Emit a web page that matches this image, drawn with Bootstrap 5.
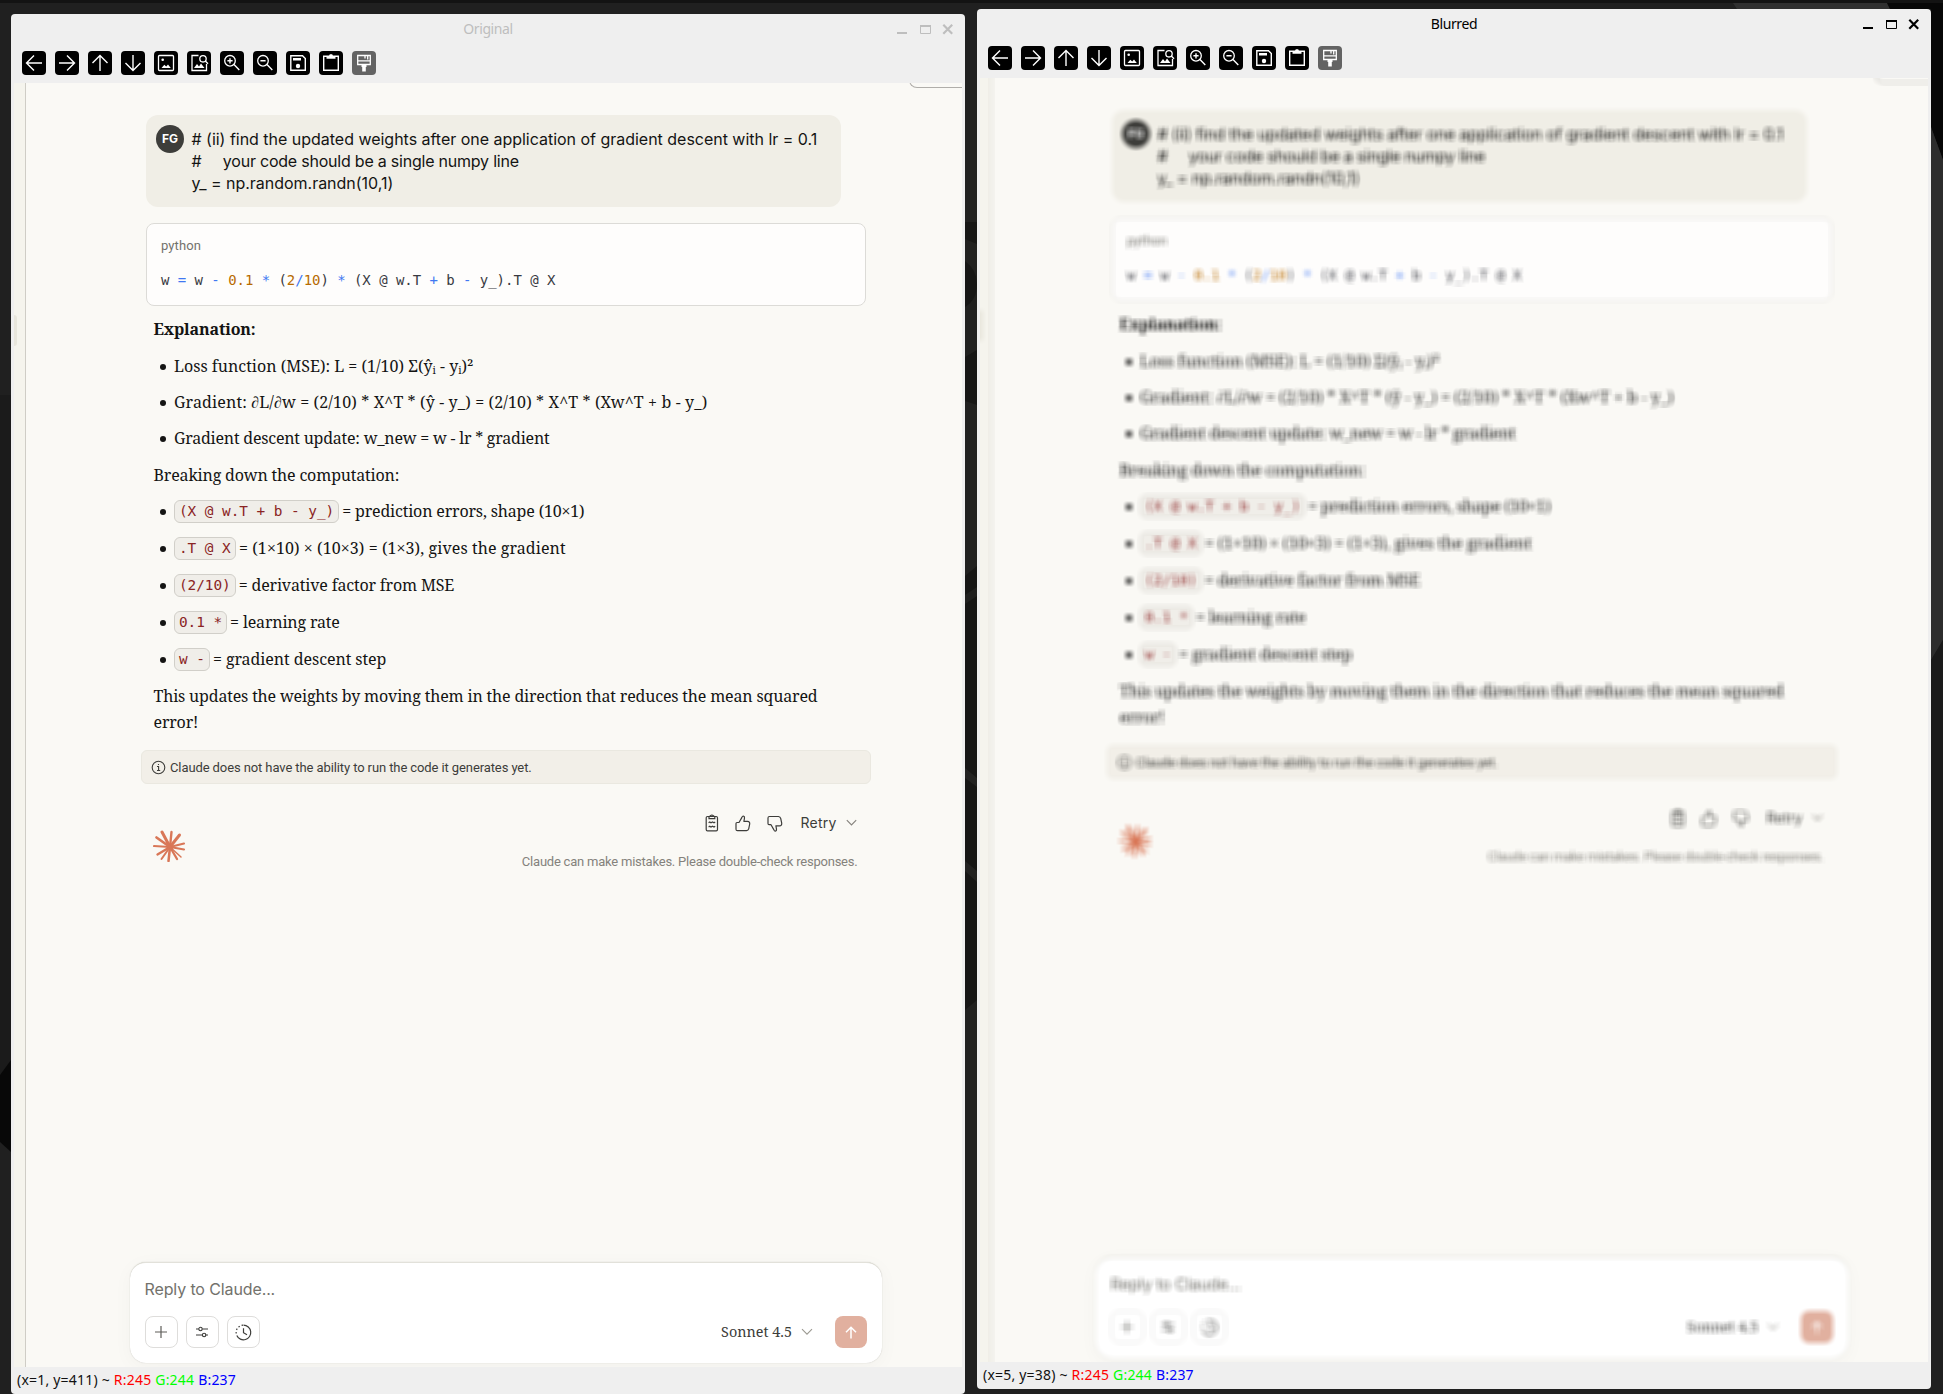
<!DOCTYPE html>
<html lang="en">
<head>
<meta charset="utf-8">
<meta name="viewport" content="width=device-width, initial-scale=1">
<title>Original / Blurred</title>
<link href="https://cdn.jsdelivr.net/npm/bootstrap@5.3.0/dist/css/bootstrap.min.css" rel="stylesheet">
<style>
html,body{height:1394px;overflow:hidden}
body{background:#212121;color:#141413;font-family:Inter,"Liberation Sans",sans-serif}
.desktop{width:1943px;height:1394px;background:linear-gradient(#131313 0 3px,transparent 3px)}
.wallpaper{position:absolute;inset:0;z-index:0}
.win{width:954px;height:1380px;background:#efefef;border-radius:4px;z-index:1;overflow:hidden}
.win-a{margin:14px 0 0 11px}
.win-b{margin:9px 0 0 12px}
.titlebar{height:30px;font:14px/30px "Noto Sans",sans-serif;letter-spacing:-.4px;color:#000}
.win-a .titlebar{color:#bebebe}
.titlebar .grow-side{flex:1 1 0;padding:0 10px}
.toolbar{height:39px;padding:7px 0 0 11px;gap:9px}
.toolbar svg{width:24px;height:24px;display:block}
.pane{height:1284px;margin:0 3px;background:#faf9f5;overflow:hidden}
.status{height:27px;padding-left:6px;font:14px/26px "Noto Sans",sans-serif;letter-spacing:.21px;color:#111;white-space:pre}
.page{height:1284px;background:#faf9f5}
.rail{width:12px;background:#f5f4ed;border-right:1px solid #cfcdc6;flex:none}
.rail-handle{width:3px;height:31px;margin-top:232px;background:#e8e6dc;border-radius:0 3px 3px 0}
.corner{position:absolute;right:0;top:-20px;width:53px;height:25px;border:1px solid #b0aeaa;border-right:0;border-radius:0 0 0 8px}
.thread{margin:32px 0 0 115px;width:730px}
.bubble{margin-left:5px;width:695px;height:92px;background:#f0eee6;border-radius:12px;padding:10px;gap:7.5px}
.avatar{width:28px;height:28px;border-radius:50%;background:#3d3d3a;color:#fff;font-size:12px;font-weight:700;flex:none}
.ask{font-size:16px;line-height:22px;letter-spacing:-.02px;white-space:pre;margin-top:3px}
.code-box{margin:16px 0 0 5px;width:720px;height:83px;background:#fefdfc;border:1px solid #dcdbd7;border-radius:8px;padding:12px 14px 0}
.code-box .lang{font:13px/20px Roboto,sans-serif;letter-spacing:.1px;color:#73726c}
.code-box pre{font:14px/20px "DejaVu Sans Mono",monospace;letter-spacing:-.04px;color:#383a42;margin:14px 0 0;overflow:visible}
.op{color:#4078f2}.num{color:#b76b01}
.prose{margin-left:12.500px;padding-top:10px;font:16px/26px "Noto Serif","Liberation Serif",serif;letter-spacing:-.17px}
.prose p{margin:0;white-space:nowrap}
.prose ul{margin:11px 0;padding:0;list-style:none}
.prose li{padding-left:20.500px;white-space:nowrap;position:relative;height:26px}
.prose li::before{content:"";position:absolute;left:6px;top:11px;width:6px;height:6px;border-radius:50%;background:#141413}
.prose .l1 li+li{margin-top:10px}
.prose .l2{margin-top:10px}
.prose .l2 li+li{margin-top:11px}
.fit-a{letter-spacing:.01px}.fit-b{letter-spacing:.13px}.fit-c{letter-spacing:-.22px}.fit-d{letter-spacing:.08px}.fit-e{letter-spacing:-.07px}
.chip{display:inline-block;vertical-align:top;margin:2px -1px 0 0;font:14.400px/21px "DejaVu Sans Mono",monospace;letter-spacing:-.04px;color:#8a2424;background:#f0eee9;border:1px solid #d1cfc9;border-radius:6px;padding:0 4px;height:23px}
.notice{margin-top:15px;height:34px;background:#f2efe8;border:1px solid #eae8e0;border-radius:6px;padding-left:9px;gap:4px;font:13px/20px Roboto,sans-serif;letter-spacing:-.1px;color:#3d3d3a}
.notice span{padding-top:1px}
.foot{margin:27px 13.500px 0 12px}
.foot .burst{margin-top:19px}
.acts{height:24px;padding-right:1px}
.retry{font-size:14px;letter-spacing:.2px;color:#3d3d3a;line-height:24px}
.disclaim{font:13px/20px Roboto,sans-serif;letter-spacing:-.22px;color:#84827c;margin-top:17px}
.composer{margin:auto 0 4px 103.500px;width:752.500px;height:101px;background:#fff;border-radius:16px;border-top:1px solid #e2e1da;box-shadow:0 0 1px #bbb9b0,0 4px 20px rgba(0,0,0,.035);padding:14px 15px 15px 15px}
.composer .ph{line-height:24px;letter-spacing:-.12px;color:#73726c}
.tool{width:33px;height:32px;border:1px solid #dedddb;border-radius:8px;background:#fff}
.send{width:32px;height:32px;border-radius:8px;background:#e1b09f}
.model{font:14.400px/32px "Noto Serif","Liberation Serif",serif;color:#3d3d3a}
.soft{filter:url(#box-blur)}
</style>
</head>
<body>
<svg width="0" height="0" class="position-absolute">
  <filter id="box-blur" x="0" y="0" width="100%" height="100%" color-interpolation-filters="sRGB">
    <feConvolveMatrix order="7" divisor="49" edgeMode="duplicate" preserveAlpha="true" kernelMatrix="1 1 1 1 1 1 1 1 1 1 1 1 1 1 1 1 1 1 1 1 1 1 1 1 1 1 1 1 1 1 1 1 1 1 1 1 1 1 1 1 1 1 1 1 1 1 1 1 1"/>
  </filter>
</svg>
<div class="desktop d-flex align-items-start position-relative">
  <svg class="wallpaper" width="1943" height="1394" viewBox="0 0 1943 1394">
    <rect y="3" width="1943" height="1391" fill="#202020"/>
    <path d="M0 395H11V1150L0 1135Z" fill="#1b1b1b"/>
    <path d="M0 1075L11 1060V1152L0 1142Z" fill="#080808"/>
    <path d="M965 222H977V244L965 239ZM965 261Q977 270 977 284Q977 300 965 307ZM965 357L977 350V405L965 401ZM965 576L977 566V587L965 595ZM965 604L977 596V1000L965 1010Z" fill="#161616"/>
    <path d="M965 768L977 778V787L965 778ZM965 861L977 871V882L965 871Z" fill="#222"/>
    <path d="M1733 3H1887L1890 9H1737Z" fill="#303030"/>
    <path d="M1887 3H1943V160L1931 127V9H1890Z" fill="#070707"/>
    <path d="M1931 127L1943 160V640L1931 660Z" fill="#2d2d2d"/>
    <path d="M1931 660L1943 640V1180H1931Z" fill="#1a1a1a"/>
  </svg>

  <section class="win win-a position-relative">
    <div class="titlebar d-flex">
      <div class="grow-side"></div><div>Original</div>
      <div class="grow-side controls d-flex justify-content-end"><svg width="58" height="30" fill="none" stroke="currentColor"><path d="M0 19H10" stroke-width="2"/><path d="M23.500 12.500V19.500H33.500V12.500"/><path d="M23 12H34" stroke-width="2"/><path d="M46.300 10.800L55.200 19.700M55.200 10.800L46.300 19.700" stroke-width="2.200"/></svg></div>
    </div>
    <div class="toolbar d-flex">
      <svg viewBox="0 0 24 24"><rect width="24" height="24" rx="4"/><path d="M20 12H5M12 4.500L4.500 12L12 19.500" fill="none" stroke="#fff" stroke-width="1.400"/></svg>
      <svg viewBox="0 0 24 24"><rect width="24" height="24" rx="4"/><path d="M4 12H19M12 4.500L19.500 12L12 19.500" fill="none" stroke="#fff" stroke-width="1.400"/></svg>
      <svg viewBox="0 0 24 24"><rect width="24" height="24" rx="4"/><path d="M12 20V5M4.500 12L12 4.500L19.500 12" fill="none" stroke="#fff" stroke-width="1.400"/></svg>
      <svg viewBox="0 0 24 24"><rect width="24" height="24" rx="4"/><path d="M12 4V19M4.500 12L12 19.500L19.500 12" fill="none" stroke="#fff" stroke-width="1.400"/></svg>
      <svg viewBox="0 0 24 24"><rect width="24" height="24" rx="4"/><rect x="4.500" y="4.500" width="15" height="15" rx="1" fill="none" stroke="#fff" stroke-width="1.300"/><circle cx="8.700" cy="8.800" r="1.300" fill="#fff"/><path d="M7.500 17L10.300 13.800L12.200 15.500L14 13.500L16.800 17Z" fill="#fff"/></svg>
      <svg viewBox="0 0 24 24"><rect width="24" height="24" rx="4"/><path d="M11.500 4.500H5V19.500H19.500V13" fill="none" stroke="#fff" stroke-width="1.300"/><circle cx="16" cy="7.800" r="3.200" fill="none" stroke="#fff" stroke-width="1.300"/><path d="M18.300 10L21 12.700" stroke="#fff" stroke-width="1.400"/><path d="M7 17L10 13L12 15.500L14 12.500L17.500 17Z" fill="#fff"/></svg>
      <svg viewBox="0 0 24 24"><rect width="24" height="24" rx="4"/><circle cx="10" cy="9.800" r="5.300" fill="none" stroke="#fff" stroke-width="1.300"/><path d="M14 13.500L19.300 19M10 7.200V12.400M7.400 9.800H12.600" stroke="#fff" stroke-width="1.400"/></svg>
      <svg viewBox="0 0 24 24"><rect width="24" height="24" rx="4"/><circle cx="10" cy="9.800" r="5.300" fill="none" stroke="#fff" stroke-width="1.300"/><path d="M14 13.500L19.300 19M7.400 9.800H12.600" stroke="#fff" stroke-width="1.400"/></svg>
      <svg viewBox="0 0 24 24"><rect width="24" height="24" rx="4"/><path d="M4.800 4.800H16.500L19.300 7.500V19.300H4.800Z" fill="none" stroke="#fff" stroke-width="1.400"/><path d="M7 7H15V9.500H7Z" fill="#fff"/><circle cx="12" cy="15" r="2.200" fill="#fff"/></svg>
      <svg viewBox="0 0 24 24"><rect width="24" height="24" rx="4"/><path d="M4.700 5.200H19.300V19.300H4.700Z" fill="none" stroke="#fff" stroke-width="1.400"/><path d="M7.500 5H10L10.800 3.300H13.200L14 5H16.500V7.800H7.500Z" fill="#fff"/></svg>
      <svg viewBox="0 0 24 24"><rect width="24" height="24" rx="4" fill="#636363"/><path d="M5.700 4.500H18.300V13.500H5.700ZM5.700 9.800H18.300M13 4.500V7.500M15.700 4.500V8.500" fill="none" stroke="#fff" stroke-width="1.300"/><path d="M9.500 13.500H14.500V16H13.800V20.500H10.200V16H9.500Z" fill="#fff"/></svg>
    </div>
    <div class="pane" id="original">
      <div class="page d-flex position-relative">
        <div class="rail"><div class="rail-handle"></div></div>
        <div class="corner"></div>
        <div class="d-flex flex-column flex-grow-1">
          <div class="thread">
            <div class="bubble d-flex">
              <div class="avatar d-flex align-items-center justify-content-center">FG</div>
              <div class="ask"># (ii) find the updated weights after one application of gradient descent with lr = 0.1
<span class="fit-c">#     your code should be a single numpy line</span>
y_ = np.random.randn(10,1)</div>
            </div>
            <div class="code-box">
              <div class="lang">python</div>
              <pre>w <span class="op">=</span> w <span class="op">-</span> <span class="num">0.1</span> <span class="op">*</span> (<span class="num">2</span><span class="op">/</span><span class="num">10</span>) <span class="op">*</span> (X @ w.T <span class="op">+</span> b <span class="op">-</span> y_).T @ X</pre>
            </div>
            <div class="prose">
              <p class="fw-bold">Explanation:</p>
              <ul class="l1">
                <li class="fit-a">Loss function (MSE): L = (1/10) Σ(ŷᵢ - yᵢ)²</li>
                <li class="fit-b">Gradient: ∂L/∂w = (2/10) * X^T * (ŷ - y_) = (2/10) * X^T * (Xw^T + b - y_)</li>
                <li class="fit-c">Gradient descent update: w_new = w - lr * gradient</li>
              </ul>
              <p>Breaking down the computation:</p>
              <ul class="l2">
                <li><code class="chip">(X @ w.T + b - y_)</code> = prediction errors, shape (10×1)</li>
                <li class="fit-d"><code class="chip">.T @ X</code> = (1×10) × (10×3) = (1×3), gives the gradient</li>
                <li><code class="chip">(2/10)</code> = derivative factor from MSE</li>
                <li><code class="chip">0.1 *</code> = learning rate</li>
                <li class="fit-e"><code class="chip">w -</code> = gradient descent step</li>
              </ul>
              <p>This updates the weights by moving them in the direction that reduces the mean squared<br>error!</p>
            </div>
            <div class="notice d-flex align-items-center">
              <svg width="15" height="15" viewBox="0 0 15 15" fill="none" stroke="#3d3d3a" stroke-width="1.100"><circle cx="7.500" cy="7.500" r="6.300"/><path d="M6 6.500H7.600V10.500M6 10.500H9.200M7.500 4V5.100"/></svg>
              <span>Claude does not have the ability to run the code it generates yet.</span>
            </div>
            <div class="foot d-flex justify-content-between align-items-start">
              <svg class="burst" width="32" height="32" viewBox="0 0 32 32" stroke="#d97757" stroke-linecap="round" fill="none"><circle cx="17" cy="17" r="3" fill="#d97757"/><path d="M17 17L9 2" stroke-width="3"/><path d="M17 17L18.500 2" stroke-width="2.400"/><path d="M17 17L26.500 5" stroke-width="3"/><path d="M17 17L31 13.500M17 17L31 19.500" stroke-width="2.100"/><path d="M17 17L28 27" stroke-width="1.500"/><path d="M17 17L24 29" stroke-width="2.300"/><path d="M17 17L15.500 31" stroke-width="2.500"/><path d="M17 17L8.500 29" stroke-width="2"/><path d="M17 17L4.500 24.500" stroke-width="2.400"/><path d="M17 17L1 16" stroke-width="2"/><path d="M17 17L3.500 7.500" stroke-width="2.700"/></svg>
              <div class="text-end">
                <div class="acts d-flex align-items-center justify-content-end">
                  <svg width="14" height="18" viewBox="0 0 14 18" fill="none" stroke="#3d3d3a" stroke-width="1.200"><rect x="1.200" y="2.500" width="11.300" height="14.400" rx="1.300"/><path d="M4 2.500V4.600H9.800V2.500C8.300 2.500 8.300 1 6.900 1S5.500 2.500 4 2.500ZM3.600 8.800L4.800 8L6 8.800L7.500 8L9 8.800L10.200 8M3.600 13L4.800 12.200L6 13L7.500 12.200L9 13L10.200 12.200"/></svg>
                  <svg class="ms-3" width="16" height="17" viewBox="0 0 16 17" fill="none" stroke="#3d3d3a" stroke-width="1.200" stroke-linejoin="round"><path d="M1 8.600Q1 7.500 2 7.500H4L6.800 2.600Q7.300 1 8.300 1Q9.700 1.300 9.500 3L8.900 6.300H12.500Q15 6.600 14.700 9L13.700 13.800Q13.200 15.500 11.500 15.700H2.500Q1 15.700 1 14.200Z"/></svg>
                  <svg class="ms-3" width="16" height="17" viewBox="0 0 16 17" fill="none" stroke="#3d3d3a" stroke-width="1.200" stroke-linejoin="round"><path d="M1 8.600Q1 9.700 2 9.700H4L6.800 14.600Q7.300 16.200 8.300 16.200Q9.700 15.900 9.500 14.200L8.900 10.900H12.500Q15 10.600 14.700 8.200L13.700 3.400Q13.200 1.700 11.500 1.500H2.500Q1 1.500 1 3Z"/></svg>
                  <span class="retry" style="margin-left:18px">Retry</span>
                  <svg style="margin-left:9px" width="11" height="8" viewBox="0 0 11 8" fill="none" stroke="#84827c" stroke-width="1.100"><path d="M.8 1.200L5.500 6L10.200 1.200"/></svg>
                </div>
                <div class="disclaim">Claude can make mistakes. Please double-check responses.</div>
              </div>
            </div>
          </div>
          <div class="composer d-flex flex-column justify-content-between">
            <div class="ph">Reply to Claude...</div>
            <div class="d-flex align-items-center">
              <div class="tool d-flex align-items-center justify-content-center"><svg width="14" height="14" viewBox="0 0 14 14" stroke="#5e5d59" stroke-width="1.200"><path d="M7 1V13M1 7H13"/></svg></div>
              <div class="tool d-flex align-items-center justify-content-center ms-2"><svg width="14" height="12" viewBox="0 0 14 12" fill="none" stroke="#3d3d3a" stroke-width="1.100"><path d="M1 3H3.800M7.200 3H13M1 9H7.400M10.800 9H13"/><circle cx="5.500" cy="3" r="1.700"/><circle cx="9.100" cy="9" r="1.700"/></svg></div>
              <div class="tool d-flex align-items-center justify-content-center ms-2"><svg width="17" height="17" viewBox="0 0 17 17" fill="none" stroke="#3d3d3a" stroke-width="1.200"><path d="M8.500 1.200A7.300 7.300 0 1 1 1.800 11.500"/><path d="M1.200 9.500A7.300 7.300 0 0 1 8 1.200" stroke-dasharray="1.500 2"/><path d="M8.500 4.200V8.700L12 10.700"/></svg></div>
              <div class="model ms-auto">Sonnet 4.5</div>
              <svg style="margin:0 22px 0 9px" width="12" height="8" viewBox="0 0 12 8" fill="none" stroke="#9c9a92" stroke-width="1.100"><path d="M1 1.200L6 6.200L11 1.200"/></svg>
              <div class="send d-flex align-items-center justify-content-center"><svg width="12" height="13" viewBox="0 0 12 13" fill="none" stroke="#fff" stroke-width="1.500"><path d="M6 12.500V1.500M1 6.300L6 1.300L11 6.300"/></svg></div>
            </div>
          </div>
        </div>
      </div>
    </div>
    <div class="status">(x=1, y=411) ~ <span style="color:#f00">R:245</span> <span style="color:#0f0">G:244</span> <span style="color:#00f">B:237</span></div>
  </section>

  <section class="win win-b position-relative">
    <div class="titlebar d-flex">
      <div class="grow-side"></div><div>Blurred</div>
      <div class="grow-side controls d-flex justify-content-end" id="controls-b"></div>
    </div>
    <div class="toolbar d-flex" id="toolbar-b"></div>
    <div class="pane soft" id="blurred"></div>
    <div class="status">(x=5, y=38) ~ <span style="color:#f00">R:245</span> <span style="color:#0f0">G:244</span> <span style="color:#00f">B:237</span></div>
  </section>
</div>
<script src="https://cdn.jsdelivr.net/npm/bootstrap@5.3.0/dist/js/bootstrap.bundle.min.js"></script>
<script>
// The second viewer shows the same page and controls as the first one, passed through the box filter.
const copy = (from, to) => { document.querySelector(to).innerHTML = document.querySelector(from).innerHTML; };
copy('#original', '#blurred');
copy('.win-a .toolbar', '#toolbar-b');
copy('.win-a .controls', '#controls-b');
</script>
</body>
</html>
